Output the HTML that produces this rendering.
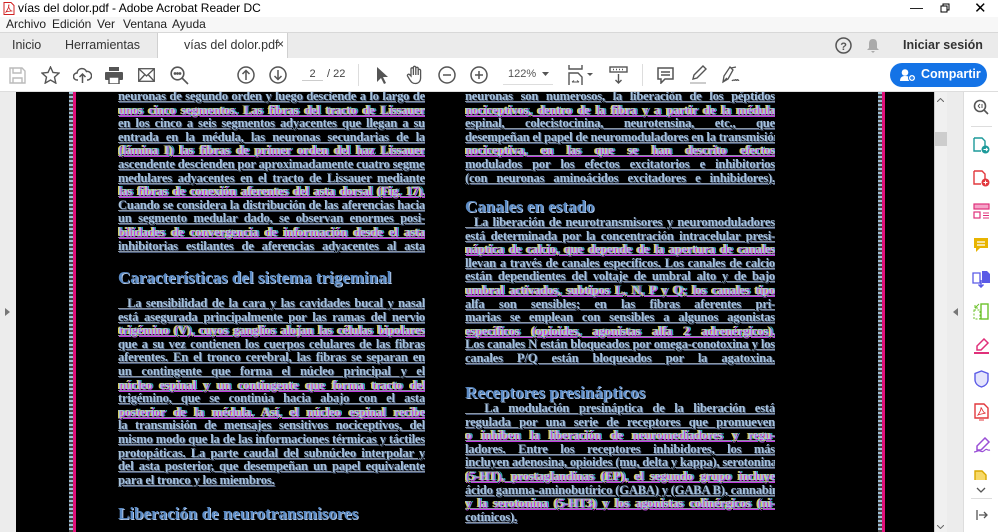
<!DOCTYPE html>
<html><head><meta charset="utf-8"><style>
*{margin:0;padding:0;box-sizing:border-box}
body{width:998px;height:532px;overflow:hidden;font-family:"Liberation Sans",sans-serif;background:#fff;position:relative}
.a{position:absolute}
.title{top:0;left:0;width:998px;height:17px;background:#fff;font-size:12px;color:#000}
.menu{top:17px;left:0;width:998px;height:16px;background:#f7f7f7;font-size:12px;color:#222}
.tabs{top:32px;left:0;width:998px;height:26px;background:#ebebeb;border-top:1px solid #d8d8d8;font-size:12.5px;color:#333}
.tool{top:58px;left:0;width:998px;height:34px;background:#fff;border-bottom:1px solid #ddd}
.doc{top:92px;left:16px;width:918px;height:440px;background:#000;overflow:hidden}
.col{position:absolute;font-family:"Liberation Serif",serif;font-weight:bold;font-size:12.6px;line-height:13.6px;color:#a6c2dc;text-align:justify;text-align-last:justify;white-space:nowrap;overflow:hidden;letter-spacing:-0.2px;text-shadow:1px 1px 0 #4a5a7a}
.col div{text-decoration:underline;text-decoration-color:#8a96a4}
.n{text-shadow:1px 1px 0 #c23ae0,-1px 0 0 #e0d040,2px 0 0 #30b0b0}
.h{position:absolute;font-family:"Liberation Serif",serif;font-weight:bold;font-size:17px;color:#5a8ac4;text-shadow:1px 1px 0 #b0c8e8;white-space:nowrap}
.strip{position:absolute;top:0;width:6px;height:440px;background:repeating-linear-gradient(#9cc0d8 0 2px,#444 2px 4px)}
.strip2{position:absolute;top:0;width:3px;height:440px;background:#e0107a}
svg{position:absolute}
</style></head><body>
<div class="a title"><svg style="left:3px;top:2px" width="12" height="13" viewBox="0 0 12 13"><path d="M1 .5h7l3 3v9H1z" fill="#fff" stroke="#d02020"/><path d="M3 10c2-3 3-6 3-7s-1 1 0 3 2 3 3 3-4 0-6 1z" fill="none" stroke="#d02020" stroke-width=".8"/></svg><span class="a" style="left:18px;top:1px">vías del dolor.pdf - Adobe Acrobat Reader DC</span>
<span class="a" style="left:910px;top:0;font-size:13px">&#8212;</span>
<svg style="left:940px;top:3px" width="10" height="10"><rect x="1" y="3" width="6" height="6" fill="none" stroke="#000"/><path d="M3 3V1h6v6H7" fill="none" stroke="#000"/></svg>
<span class="a" style="left:974px;top:-1px;font-size:15px">✕</span></div>
<div class="a menu"><span class="a" style="left:6px;top:0">Archivo</span><span class="a" style="left:52px;top:0">Edición</span><span class="a" style="left:97px;top:0">Ver</span><span class="a" style="left:123px;top:0">Ventana</span><span class="a" style="left:172px;top:0">Ayuda</span></div>
<div class="a tabs">
<span class="a" style="left:12px;top:5px">Inicio</span><span class="a" style="left:65px;top:5px">Herramientas</span>
<div class="a" style="left:157px;top:0;width:131px;height:26px;background:#fff;border-left:1px solid #d0d0d0;border-right:1px solid #d0d0d0"><span class="a" style="left:26px;top:5px">vías del dolor.pdf</span><span class="a" style="left:119px;top:4px;font-size:12px">×</span></div>
<svg style="left:835px;top:4px" width="17" height="17"><circle cx="8.5" cy="8.5" r="7.5" fill="none" stroke="#555" stroke-width="1.5"/><text x="5.2" y="13" font-size="11" font-weight="bold" fill="#555" font-family="Liberation Sans">?</text></svg>
<svg style="left:866px;top:5px" width="14" height="15"><path d="M7 1c-3 0-4 2-4 5v4l-2 2h12l-2-2V6c0-3-1-5-4-5zM5 13h4l-2 2z" fill="#aaa"/></svg>
<span class="a" style="left:903px;top:5px;font-weight:bold;color:#333">Iniciar sesión</span></div>
<div class="a tool">
<svg style="left:9px;top:9px" width="17" height="17" fill="none" stroke="#bbb" stroke-width="1.4"><path d="M1 1h12l3 3v12H1z"/><path d="M4 1v5h8V1M4 16v-5h9v5"/></svg>
<svg style="left:41px;top:8px" width="19" height="18" fill="none" stroke="#555" stroke-width="1.4"><path d="M9.5 1l2.5 5.5 6 .6-4.5 4 1.3 6-5.3-3.1-5.3 3.1 1.3-6-4.5-4 6-.6z"/></svg>
<svg style="left:73px;top:8px" width="19" height="18" fill="none" stroke="#555" stroke-width="1.5"><path d="M5 14H4a3.5 3.5 0 010-7 5 5 0 019.5-1.5A4 4 0 0115 14h-1M9.5 17V8M6.5 11l3-3 3 3"/></svg>
<svg style="left:105px;top:9px" width="18" height="17" fill="#555"><rect x="4" y="0" width="10" height="4"/><rect x="0" y="5" width="18" height="8" rx="1"/><rect x="4" y="10" width="10" height="7" fill="#fff" stroke="#555" stroke-width="1.5"/></svg>
<svg style="left:138px;top:10px" width="17" height="14" fill="none" stroke="#555" stroke-width="1.3"><rect x=".7" y=".7" width="15.6" height="12.6"/><path d="M1 1l7.5 7L16 1M1 13l5.5-6M16 13l-5.5-6"/></svg>
<svg style="left:170px;top:8px" width="19" height="19" fill="none" stroke="#555" stroke-width="1.6"><circle cx="7.5" cy="7.5" r="6.3"/><path d="M12 12l6 6"/><circle cx="5" cy="7.5" r=".6" fill="#555"/><circle cx="7.5" cy="7.5" r=".6" fill="#555"/><circle cx="10" cy="7.5" r=".6" fill="#555"/></svg>
<svg style="left:237px;top:8px" width="18" height="18" fill="none" stroke="#555" stroke-width="1.5"><circle cx="9" cy="9" r="8"/><path d="M9 14V4.5M5.5 8L9 4.5 12.5 8"/></svg>
<svg style="left:269px;top:8px" width="18" height="18" fill="none" stroke="#555" stroke-width="1.5"><circle cx="9" cy="9" r="8"/><path d="M9 4v9.5M5.5 10L9 13.5 12.5 10"/></svg>
<span class="a" style="left:302px;top:10px;width:21px;font-size:11px;color:#444;text-align:center;border-bottom:1px solid #ccc">2</span><span class="a" style="left:327px;top:10px;font-size:11px;color:#444">/ 22</span>
<div class="a" style="left:358px;top:6px;width:1px;height:22px;background:#ddd"></div>
<svg style="left:376px;top:8px" width="12" height="18"><path d="M1 1v15l4-4 3 6 2-1-3-6h5z" fill="#555"/></svg>
<svg style="left:406px;top:7px" width="18" height="20" fill="none" stroke="#555" stroke-width="1.3"><path d="M5 11V4a1.2 1.2 0 012.4 0v6V2.5a1.2 1.2 0 012.4 0V10V3.5a1.2 1.2 0 012.4 0V10V5.5a1.2 1.2 0 012.4 0V13c0 3-2 5.5-5 5.5s-4-1-6-4L1.5 11a1.3 1.3 0 012-1.5z"/></svg>
<svg style="left:438px;top:8px" width="18" height="18" fill="none" stroke="#555" stroke-width="1.5"><circle cx="9" cy="9" r="8"/><path d="M5 9h8"/></svg>
<svg style="left:470px;top:8px" width="18" height="18" fill="none" stroke="#555" stroke-width="1.5"><circle cx="9" cy="9" r="8"/><path d="M5 9h8M9 5v8"/></svg>
<span class="a" style="left:508px;top:10px;font-size:11px;color:#555">122%</span><svg style="left:542px;top:14px" width="7" height="4"><path d="M0 0h7L3.5 4z" fill="#555"/></svg>
<div class="a" style="left:503px;top:26px;width:50px;height:1px;background:#ddd"></div>
<svg style="left:568px;top:7px" width="26" height="20" fill="none" stroke="#555" stroke-width="1.4"><path d="M1 0v4h13V0M1 20V8h9l4 4v8"/><path d="M4 17h7M4 17l2-1.5M11 17l-2-1.5" stroke-width="1"/><path d="M19 8h6l-3 3z" fill="#555" stroke="none"/></svg>
<svg style="left:609px;top:8px" width="19" height="18" fill="none" stroke="#555" stroke-width="1.4"><rect x="1" y="1" width="17" height="5"/><path d="M4 3.5h1M7 3.5h1M10 3.5h1M13 3.5h1M9.5 8v9M6.5 14l3 3 3-3"/></svg>
<div class="a" style="left:642px;top:6px;width:1px;height:22px;background:#ddd"></div>
<svg style="left:657px;top:9px" width="17" height="17" fill="none" stroke="#555" stroke-width="1.5"><path d="M1 1h15v11H8l-4 4v-4H1z"/><path d="M4 5h9M4 8h9"/></svg>
<svg style="left:689px;top:7px" width="18" height="20" fill="none" stroke="#555" stroke-width="1.4"><path d="M14 1l3 3-9 9-4 1 1-4z"/><path d="M1 18h16" stroke="#ccc" stroke-width="2"/></svg>
<svg style="left:721px;top:8px" width="20" height="18" fill="none" stroke="#555" stroke-width="1.3"><path d="M9 1l3 3-5 9-5 3 1-6z"/><path d="M10 2l5-1M2 16l4-4M11 15c1-2 2 0 3-1s1 1 2 0 1 1 2 0"/></svg>
<div class="a" style="left:890px;top:5px;width:97px;height:24px;border-radius:12px;background:#1473e6;color:#fff;font-size:12.5px;font-weight:bold"><svg style="left:10px;top:6px" width="16" height="13" fill="#fff"><circle cx="5" cy="3.5" r="3.3"/><path d="M0 12c0-4 2.5-5 5-5s4 .5 4.5 1.5V12z"/><circle cx="12" cy="9" r="3.5" stroke="#1473e6"/><path d="M12 7v4M10 9h4" stroke="#1473e6" stroke-width="1.2"/></svg><span class="a" style="left:31px;top:4px">Compartir</span></div>
</div>
<div class="a" style="left:0;top:92px;width:16px;height:440px;background:#ececec"></div>
<svg style="left:5px;top:308px" width="5" height="8"><path d="M0 0l5 4-5 4z" fill="#777"/></svg>
<div class="a doc">
<div class="strip" style="left:53px"></div><div class="strip2" style="left:57px"></div>
<div class="strip" style="left:862px"></div><div class="strip2" style="left:866px"></div>
<div class="col" style="left:102px;top:-2px;width:307px">
<div>neuronas de segundo orden y luego desciende a lo largo de</div>
<div class="n">unos cinco segmentos. Las fibras del tracto de Lissauer</div>
<div>en los cinco a seis segmentos adyacentes que llegan a su</div>
<div>entrada en la médula, las neuronas secundarias de la</div>
<div class="n">(lámina I) las fibras de primer orden del haz Lissauer</div>
<div>ascendente descienden por aproximadamente cuatro segmentos</div>
<div>medulares adyacentes en el tracto de Lissauer mediante</div>
<div class="n">las fibras de conexión aferentes del asta dorsal (Fig. 17).</div>
<div>Cuando se considera la distribución de las aferencias hacia</div>
<div>un segmento medular dado, se observan enormes posi-</div>
<div class="n">bilidades de convergencia de información desde el asta</div>
<div>inhibitorias estilantes de aferencias adyacentes al asta</div>
</div>
<div class="h" style="left:102px;top:176px">Características del sistema trigeminal</div>
<div class="col" style="left:102px;top:205px;width:307px">
<div>&nbsp;&nbsp;La sensibilidad de la cara y las cavidades bucal y nasal</div>
<div>está asegurada principalmente por las ramas del nervio</div>
<div class="n">trigémino (V), cuyos ganglios alojan las células bipolares</div>
<div>que a su vez contienen los cuerpos celulares de las fibras</div>
<div>aferentes. En el tronco cerebral, las fibras se separan en</div>
<div>un contingente que forma el núcleo principal y el</div>
<div class="n">núcleo espinal y un contingente que forma tracto del</div>
<div>trigémino, que se continúa hacia abajo con el asta</div>
<div class="n">posterior de la médula. Así, el núcleo espinal recibe</div>
<div>la transmisión de mensajes sensitivos nociceptivos, del</div>
<div>mismo modo que la de las informaciones térmicas y táctiles</div>
<div>protopáticas. La parte caudal del subnúcleo interpolar y</div>
<div>del asta posterior, que desempeñan un papel equivalente</div>
<div style="text-align-last:left">para el tronco y los miembros.</div>
</div>
<div class="h" style="left:102px;top:412px">Liberación de neurotransmisores</div>
<div class="col" style="left:449px;top:-2px;width:310px">
<div>neuronas son numerosos, la liberación de los péptidos</div>
<div class="n">nociceptivos, dentro de la fibra y a partir de la médula</div>
<div>espinal, colecistocinina, neurotensina, etc., que</div>
<div>desempeñan el papel de neuromoduladores en la transmisión</div>
<div class="n">nociceptiva, en las que se han descrito efectos</div>
<div>modulados por los efectos excitatorios e inhibitorios</div>
<div>(con neuronas aminoácidos excitadores e inhibidores).</div>
</div>
<div class="h" style="left:449px;top:105px">Canales en estado</div>
<div class="col" style="left:449px;top:124px;width:310px">
<div>&nbsp;&nbsp;La liberación de neurotransmisores y neuromoduladores</div>
<div>está determinada por la concentración intracelular presi-</div>
<div class="n">náptica de calcio, que depende de la apertura de canales</div>
<div>llevan a través de canales específicos. Los canales de calcio</div>
<div>están dependientes del voltaje de umbral alto y de bajo</div>
<div class="n">umbral activados, subtipos L, N, P y Q; los canales tipo</div>
<div>alfa son sensibles; en las fibras aferentes pri-</div>
<div>marias se emplean con sensibles a algunos agonistas</div>
<div class="n">específicos (opioides, agonistas alfa 2 adrenérgicos).</div>
<div>Los canales N están bloqueados por omega-conotoxina y los</div>
<div>canales P/Q están bloqueados por la agatoxina.</div>
</div>
<div class="h" style="left:449px;top:291px">Receptores presinápticos</div>
<div class="col" style="left:449px;top:310px;width:310px">
<div>&nbsp;&nbsp;La modulación presináptica de la liberación está</div>
<div>regulada por una serie de receptores que promueven</div>
<div class="n">o inhiben la liberación de neuromediadores y regu-</div>
<div>ladores. Entre los receptores inhibidores, los más</div>
<div>incluyen adenosina, opioides (mu, delta y kappa), serotonina</div>
<div class="n">(5-HT), prostaglandinas (EP), el segundo grupo incluye</div>
<div>ácido gamma-aminobutírico (GABA) y (GABA B), cannabinoides</div>
<div class="n">y la serotonina (5-HT3) y los agonistas colinérgicos (ni-</div>
<div style="text-align-last:left">cotínicos).</div>
</div>
</div>
<div class="a" style="left:934px;top:92px;width:13px;height:440px;background:#f0f0f0;border-left:1px solid #ccc"></div>
<div class="a" style="left:935px;top:132px;width:12px;height:14px;background:#cdcdcd"></div>
<svg style="left:937px;top:98px" width="7" height="4"><path d="M0 4l3.5-3.5L7 4" fill="none" stroke="#666"/></svg>
<svg style="left:937px;top:525px" width="7" height="4"><path d="M0 0l3.5 3.5L7 0" fill="none" stroke="#666"/></svg>
<div class="a" style="left:947px;top:92px;width:16px;height:440px;background:#ececec"></div>
<svg style="left:953px;top:308px" width="5" height="8"><path d="M5 0L0 4l5 4z" fill="#777"/></svg>
<div class="a" style="left:963px;top:92px;width:35px;height:440px;background:#fff;border-left:1px solid #ddd"></div>
<svg style="left:973px;top:99px" width="16" height="16" fill="none" stroke="#555" stroke-width="1.6"><circle cx="7" cy="7" r="5.5"/><path d="M11 11l4 4"/><path d="M5 7l2-2M5 7l2 2M9 5v4" stroke-width="1"/></svg>
<div class="a" style="left:971px;top:126px;width:21px;height:1px;background:#ddd"></div>
<svg style="left:973px;top:137px" width="17" height="17"><path d="M1 1h8l3 3v5" fill="none" stroke="#1d9a9a" stroke-width="1.4"/><path d="M1 1v13h7" fill="none" stroke="#1d9a9a" stroke-width="1.4"/><circle cx="12.5" cy="12.5" r="4" fill="#1d9a9a"/><path d="M10.5 12.5h4M13 11l1.5 1.5L13 14" stroke="#fff" fill="none"/></svg>
<svg style="left:973px;top:170px" width="17" height="17"><path d="M1 1h8l3 3v5M1 1v13h7" fill="none" stroke="#e2383d" stroke-width="1.4"/><circle cx="12.5" cy="12.5" r="4" fill="#e2383d"/><path d="M10.5 12.5h4M12.5 10.5v4" stroke="#fff"/></svg>
<svg style="left:973px;top:203px" width="17" height="16"><rect x="1" y="1" width="15" height="5" fill="#f4a3c8" stroke="#e0307a" stroke-width="1.2"/><rect x="1" y="9" width="6" height="6" fill="none" stroke="#e0307a" stroke-width="1.2"/><path d="M10 10h6M10 12.5h6M10 15h6" stroke="#e0307a"/></svg>
<svg style="left:973px;top:237px" width="16" height="16"><path d="M1 1h14v10H7l-4 4v-4H1z" fill="#e8b400"/><path d="M4 5h8M4 8h8" stroke="#fff" stroke-width="1.3"/></svg>
<svg style="left:972px;top:270px" width="18" height="18"><path d="M1 3h7v10H1z" fill="#fff" stroke="#5a5ae6" stroke-width="1.3"/><path d="M10 1h5l3 3v9h-8z" fill="#5a5ae6"/><path d="M9 10v7M6.5 14.5L9 17l2.5-2.5" stroke="#5a5ae6" fill="none" stroke-width="1.5"/></svg>
<svg style="left:973px;top:303px" width="17" height="17"><rect x="8" y="1" width="7" height="15" fill="none" stroke="#6cc22a" stroke-width="1.4"/><rect x="1" y="7" width="6" height="9" fill="none" stroke="#6cc22a" stroke-dasharray="2 1.5"/><path d="M2 5l4-4M2 5h3M2 5V2" stroke="#6cc22a" fill="none"/></svg>
<svg style="left:973px;top:338px" width="17" height="16"><path d="M11 1l4 4-7 7H4V8z" fill="none" stroke="#e0307a" stroke-width="1.5"/><path d="M1 15h15" stroke="#e0307a" stroke-width="2"/></svg>
<svg style="left:974px;top:370px" width="15" height="18"><path d="M7.5 1L14 3.5v6c0 4-3 6.5-6.5 7.5C4 16 1 13.5 1 9.5v-6z" fill="#e4e4fc" stroke="#5a5ae6" stroke-width="1.4"/></svg>
<svg style="left:974px;top:403px" width="15" height="18"><path d="M1 1h9l4 4v10H1z" fill="none" stroke="#e2383d" stroke-width="1.4"/><path d="M4 12c2-3 3-5 3-7s2 5 4 5-5 1-7 2z" fill="none" stroke="#e2383d" stroke-width=".9"/><path d="M5 17h5" stroke="#e2383d"/></svg>
<svg style="left:973px;top:437px" width="18" height="17"><path d="M12 1l4 4-8 8H4V9z" fill="none" stroke="#9a4fd6" stroke-width="1.5"/><path d="M1 15c3 0 4-2 6-1s3 1 5-1 2 1 5 0" fill="none" stroke="#9a4fd6" stroke-width="1.2"/></svg>
<svg style="left:974px;top:470px" width="14" height="10"><path d="M1 10V1h7l4 4v5" fill="#f7d968" stroke="#d9a800" stroke-width="1.4"/></svg>
<svg style="left:976px;top:487px" width="10" height="6"><path d="M1 1l4 4 4-4" fill="none" stroke="#555" stroke-width="1.3"/></svg>
<div class="a" style="left:971px;top:498px;width:21px;height:1px;background:#ddd"></div>
<svg style="left:976px;top:509px" width="12" height="12"><path d="M1 1v10M3 6h8M8 3l3 3-3 3" fill="none" stroke="#555" stroke-width="1.3"/></svg>
</body></html>
